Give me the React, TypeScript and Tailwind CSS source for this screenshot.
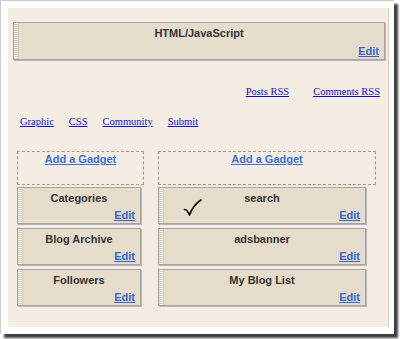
import React from "react";

const sans = { fontFamily: '"Liberation Sans", Arial, sans-serif' };
const serif = { fontFamily: '"Liberation Serif", "Times New Roman", serif' };

function Handle() {
  return (
    <div className="w-[5px] shrink-0 self-stretch bg-[repeating-linear-gradient(180deg,#f7f3ec_0px,#f7f3ec_1px,#d9d0bf_1px,#d9d0bf_2px)] border-r border-[#d4cbb9]" />
  );
}

function Widget({
  title,
  w,
  h = 37,
  children,
}: {
  title: string;
  w: number;
  h?: number;
  children?: React.ReactNode;
}) {
  return (
    <div
      className="relative flex bg-[#e6dccb] border border-[#aaa59c] shadow-[1px_1px_0_#b3b2c6]"
      style={{ width: w, height: h }}
    >
      <Handle />
      <div className="flex-1 flex flex-col justify-between pt-[4px] pb-[1px] pr-[5px]" style={sans}>
        <div className="text-center text-[11px] leading-[13px] font-bold text-[#333333]">{title}</div>
        <div className="text-right text-[11px] leading-[13px] font-bold text-[#3366cc] underline">Edit</div>
      </div>
      {children}
    </div>
  );
}

function AddGadget({ w }: { w: number }) {
  return (
    <div
      className="h-[34px] border border-dashed border-[#a3a09a] text-center text-[11px] leading-[13px] pt-[1px]"
      style={{ width: w, ...sans }}
    >
      <span className="font-bold text-[#3f6fd6] underline">Add a Gadget</span>
    </div>
  );
}

export default function App() {
  return (
    <div className="w-[400px] h-[339px] bg-white">
      <div className="w-[394px] h-[334px] bg-white border-l border-t border-[#cdcdcd] shadow-[4px_4px_2px_rgba(0,0,0,0.75)] pl-[7px] pt-[7px]">
        <div className="w-[381px] h-[319px] bg-[#f4ede4] border-r border-[#d3d0cb] flex flex-col">
          <div className="ml-[5px] mt-[14px]">
            <Widget title="HTML/JavaScript" w={372} h={38} />
          </div>

          <div className="flex justify-end gap-[24px] pr-[8px] mt-[25px] text-[10.5px] leading-[13px] text-[#1010c8] underline" style={serif}>
            <span>Posts RSS</span>
            <span>Comments RSS</span>
          </div>

          <div className="flex gap-[15px] pl-[12px] mt-[17px] text-[10.5px] leading-[13px] text-[#1010c8] underline" style={serif}>
            <span>Graphic</span>
            <span>CSS</span>
            <span>Community</span>
            <span>Submit</span>
          </div>

          <div className="flex gap-[14px] pl-[9px] mt-[23px]">
            <div className="flex flex-col w-[127px]">
              <AddGadget w={127} />
              <div className="flex flex-col gap-[4px] mt-[2px]">
                <Widget title="Categories" w={124} />
                <Widget title="Blog Archive" w={124} />
                <Widget title="Followers" w={124} />
              </div>
            </div>
            <div className="flex flex-col w-[218px]">
              <AddGadget w={218} />
              <div className="flex flex-col gap-[4px] mt-[2px]">
                <Widget title="search" w={208}>
                  <svg className="absolute left-[24px] top-[11px]" width="19" height="18" viewBox="0 0 19 18">
                    <path d="M1.5 10.5 C3 10.5 5 12.5 6.5 16 C9 9.5 13 4 18 1" fill="none" stroke="#000" strokeWidth="1.6" strokeLinecap="round" strokeLinejoin="round" />
                  </svg>
                </Widget>
                <Widget title="adsbanner" w={208} />
                <Widget title="My Blog List" w={208} />
              </div>
            </div>
          </div>
        </div>
      </div>
    </div>
  );
}
